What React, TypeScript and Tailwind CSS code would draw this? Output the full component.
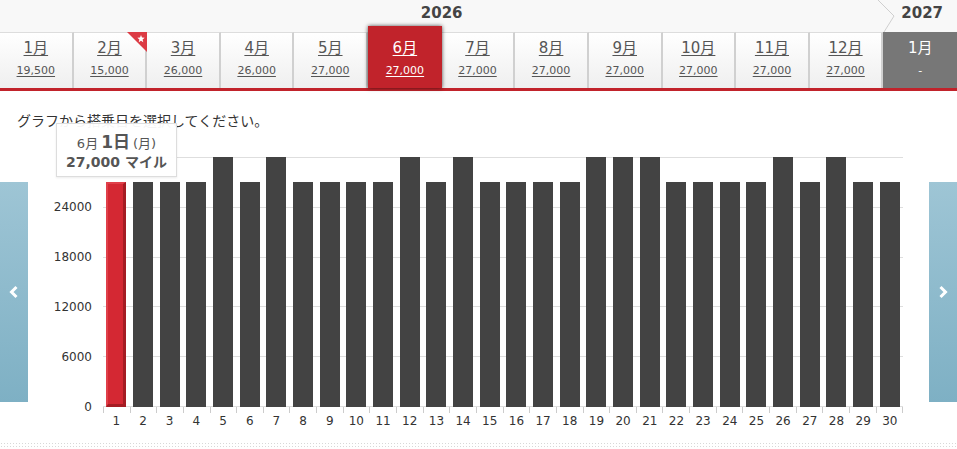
import React from "react";

const months = [
  { m: "1月", v: "19,500" },
  { m: "2月", v: "15,000", star: true },
  { m: "3月", v: "26,000" },
  { m: "4月", v: "26,000" },
  { m: "5月", v: "27,000" },
  { m: "6月", v: "27,000", active: true },
  { m: "7月", v: "27,000" },
  { m: "8月", v: "27,000" },
  { m: "9月", v: "27,000" },
  { m: "10月", v: "27,000" },
  { m: "11月", v: "27,000" },
  { m: "12月", v: "27,000" },
  { m: "1月", v: "-", disabled: true },
];

const highDays = [5, 7, 12, 14, 19, 20, 21, 26, 28];
const days = Array.from({ length: 30 }, (_, i) => i + 1);
// top gridline (30000) has no visible label: the tooltip sits over it
const yLabels = ["0", "6000", "12000", "18000", "24000", ""];

function MonthTab({ m, v, star, active, disabled }: { m: string; v: string; star?: boolean; active?: boolean; disabled?: boolean }) {
  if (active) {
    return (
      <div className="relative z-10 -mt-[6px] flex h-[62px] flex-col items-center bg-[#c1232b] pt-[12px] text-white shadow-[0_0_4px_rgba(0,0,0,0.7)]">
        <span className="text-[15px] leading-[20px] underline underline-offset-2">{m}</span>
        <span className="mt-[5px] text-[11px] leading-[16px] underline underline-offset-2">{v}</span>
      </div>
    );
  }
  if (disabled) {
    return (
      <div className="flex h-[56px] flex-col items-center bg-[#777777] pt-[6px] text-white">
        <span className="text-[15px] leading-[20px]">{m}</span>
        <span className="mt-[5px] text-[11px] leading-[16px]">{v}</span>
      </div>
    );
  }
  return (
    <div className="relative flex h-[56px] flex-col items-center border-r-2 border-t border-r-[#d0d0d0] border-t-[#dddddd] bg-gradient-to-b from-white to-[#efefef] pt-[5px] text-[#555555]">
      <span className="text-[15px] leading-[20px] underline underline-offset-2">{m}</span>
      <span className="mt-[5px] text-[11px] leading-[16px] underline underline-offset-2">{v}</span>
      {star && (
        <svg className="absolute right-[-2px] top-[-1px]" width="20" height="20" viewBox="0 0 20 20">
          <polygon points="0,0 20,0 20,20" fill="#dc3b44" />
          <polygon
            points="14,3 15,5.6 17.7,5.8 15.6,7.5 16.3,10.2 14,8.7 11.7,10.2 12.4,7.5 10.3,5.8 13,5.6"
            fill="#ffffff"
          />
        </svg>
      )}
    </div>
  );
}

function ArrowPanel({ dir }: { dir: "left" | "right" }) {
  return (
    <div className="mt-[25px] flex h-[220px] w-[28px] items-center justify-center bg-gradient-to-b from-[#9ec5d5] to-[#7eb0c4]">
      <svg width="10" height="14" viewBox="0 0 10 14">
        <polyline
          points={dir === "left" ? "7.5,2 2.5,7 7.5,12" : "2.5,2 7.5,7 2.5,12"}
          fill="none"
          stroke="#ffffff"
          strokeWidth="3"
        />
      </svg>
    </div>
  );
}

export default function App() {
  return (
    <div className="relative h-[449px] w-[957px] overflow-hidden bg-white font-['DejaVu_Sans','Noto_Sans_CJK_JP',sans-serif] text-[#333333]">
      {/* year header */}
      <div className="relative grid h-[32px] grid-cols-13 bg-[#f8f8f8]">
        <div className="col-span-12 pt-[3px] text-center text-[15px] font-bold leading-[20px] text-[#444444]">2026</div>
        <div className="pl-[4px] pt-[3px] text-center text-[15px] font-bold leading-[20px] text-[#444444]">2027</div>
        <svg className="absolute left-[876px] top-0" width="22" height="32" viewBox="0 0 22 32">
          <polyline points="2,0 18,16 8,32" fill="none" stroke="#cfcfcf" strokeWidth="1" />
        </svg>
      </div>

      {/* month tabs */}
      <div className="grid grid-cols-13">
        {months.map((t, i) => (
          <MonthTab key={i} {...t} />
        ))}
      </div>
      <div className="h-[3px] bg-[#c1232b]" />

      {/* chart */}
      <section className="relative">
        <p className="pl-[17px] pt-[21px] text-[14px] leading-[18px] text-[#333333]">グラフから搭乗日を選択してください。</p>

        <div className="mt-[27px] flex">
          <ArrowPanel dir="left" />

          <div className="flex h-[250px] w-[75px] flex-col-reverse justify-between pr-[11px]">
            {yLabels.map((l, i) => (
              <div key={i} className="flex h-0 items-center justify-end text-[12px] text-[#333333]">
                {l}
              </div>
            ))}
          </div>

          <div className="w-[800px]">
            <div className="grid h-[250px]">
              <div className="col-start-1 row-start-1 flex flex-col justify-between">
                {yLabels.map((_, i) => (
                  <div key={i} className="h-px bg-[#dedede]" />
                ))}
              </div>
              <div className="col-start-1 row-start-1 flex items-end">
                {days.map((d) => (
                  <div key={d} className="flex flex-1 justify-center">
                    {d === 1 ? (
                      <div className="h-[225px] w-[20px] border-b-[3px] border-l-2 border-r-[3px] border-t-2 border-b-[#a51c23] border-l-[#e0404a] border-r-[#a51c23] border-t-[#e0404a] bg-[#d42833]" />
                    ) : (
                      <div
                        className={highDays.includes(d) ? "h-[250px] w-[20px] bg-[#434343]" : "h-[225px] w-[20px] bg-[#434343]"}
                      />
                    )}
                  </div>
                ))}
              </div>
            </div>
            <div className="flex h-[6px] border-r border-[#cccccc]">
              {days.map((d) => (
                <div key={d} className="flex-1 border-l border-[#cccccc]" />
              ))}
            </div>
            <div className="flex h-[16px]">
              {days.map((d) => (
                <div key={d} className="flex-1 text-center text-[12px] leading-[16px] text-[#333333]">
                  {d}
                </div>
              ))}
            </div>
          </div>

          <div className="ml-auto">
            <ArrowPanel dir="right" />
          </div>
        </div>

        <div className="mt-[13px] h-[9px] bg-[radial-gradient(#d8d8d8_0.8px,transparent_0.8px)] bg-[length:3px_3px]" />

        {/* tooltip */}
        <div className="absolute left-[56px] top-[32px] flex h-[54px] w-[121px] flex-col items-center justify-center border border-[#dddddd] bg-white/95 pt-[2px] text-[#555555] shadow-[0_1px_2px_rgba(0,0,0,0.08)]">
          <div className="flex items-baseline gap-[3px] leading-[20px]">
            <span className="text-[13px]">6月</span>
            <span className="text-[17px] font-bold">1日</span>
            <span className="text-[13px]">(月)</span>
          </div>
          <div className="text-[14px] font-bold leading-[17px]">27,000 マイル</div>
        </div>
      </section>
    </div>
  );
}
